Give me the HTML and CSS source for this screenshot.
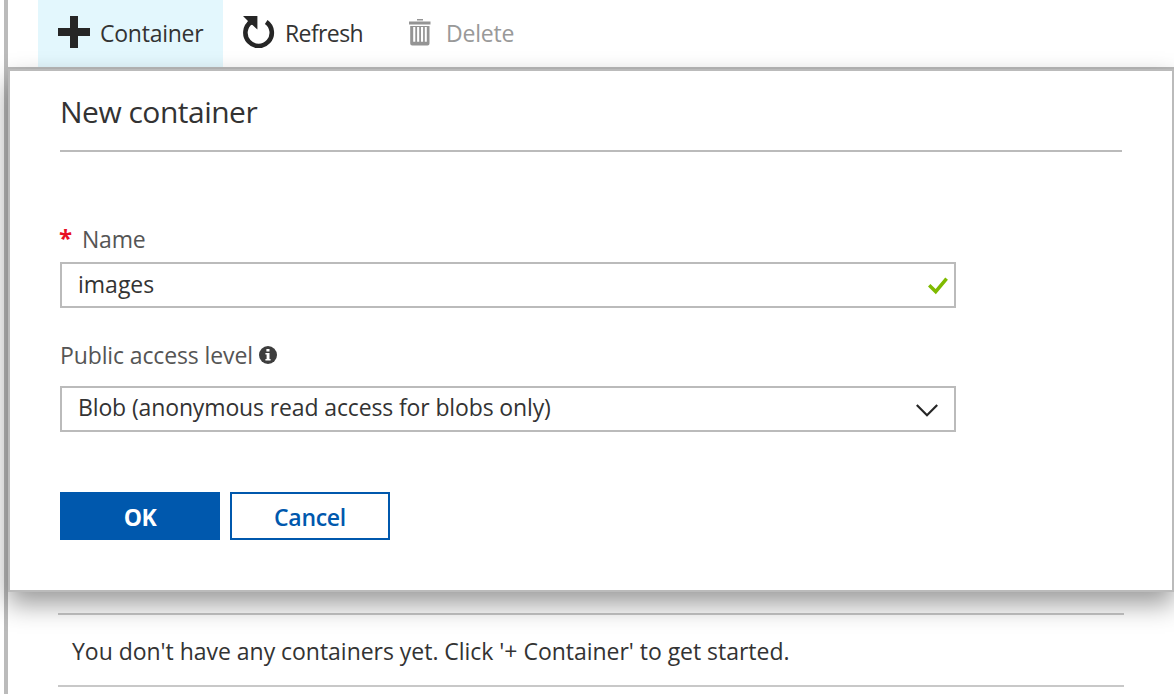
FILE: index.html
```html
<!DOCTYPE html>
<html lang="en">
<head>
<meta charset="utf-8">
<title>New container</title>
<link rel="stylesheet" href="styles.css">
</head>
<body>
<main class="blade">
  <nav class="toolbar">
    <button class="tool tool-active">
      <svg class="icon-plus" width="32" height="32" viewBox="0 0 32 32"><path d="M12 0h8v12h12v8H20v12h-8V20H0v-8h12z" fill="#262626"/></svg>
      <span class="t-container">Container</span>
    </button>
    <button class="tool tool-refresh">
      <svg width="32" height="32" viewBox="0 0 32 32"><path d="M23.2 6A13.2 13.2 0 1 1 8 6" fill="none" stroke="#262626" stroke-width="4.6"/><path d="M0 0h14.4v13.6L9.5 9 4 7.5 5 5z" fill="#262626"/></svg>
      <span class="t-refresh">Refresh</span>
    </button>
    <button class="tool tool-delete">
      <svg width="22" height="27" viewBox="0 0 22 27"><path d="M8 0h6v1.4H8zM0 2.4h21.5v3H0zM1.2 7h19.3v17.5q0 2-2 2H3.2q-2 0-2-2zM4.2 8v14.8h2.1V8zm3.9 0v14.8h2.1V8zm3.9 0v14.8h2.1V8zm3.8 0v14.8h2V8z" fill="#949494" fill-rule="evenodd"/></svg>
      <span class="t-delete">Delete</span>
    </button>
  </nav>
  <section class="list"><p class="t-empty">You don't have any containers yet. Click '+ Container' to get started.</p></section>
</main>
<form class="dialog">
  <h1 class="heading"><span class="t-heading">New container</span></h1>
  <label class="label label-name" for="name"><span class="required">*</span><span class="t-name">Name</span></label>
  <div class="field" id="name"><span class="t-value">images</span>
    <svg class="check" width="20" height="18" viewBox="0 0 20 18"><path d="M1.2 8.3 7.7 14.6 18.6 1.6" fill="none" stroke="#7fba00" stroke-width="3.5"/></svg>
  </div>
  <div class="label label-access"><span class="t-access">Public access level</span>
    <svg class="info" width="18" height="18" viewBox="0 0 18 18"><circle cx="9" cy="9" r="9" fill="#3d3d3d"/><path d="M7.4 3h3.1v2.6H7.4zM6.4 7h4.1v6h1.1v1.6H6.4V13h1.2V8.6H6.4z" fill="#fff"/></svg>
  </div>
  <div class="field"><span class="t-option">Blob (anonymous read access for blobs only)</span>
    <svg class="chevron" width="22" height="13" viewBox="0 0 22 13"><path d="M.8 1 11 11.2 21.2 1" fill="none" stroke="#262626" stroke-width="2.2"/></svg>
  </div>
  <div class="actions">
    <button type="button" class="btn btn-primary"><span class="t-ok">OK</span></button>
    <button type="button" class="btn"><span class="t-cancel">Cancel</span></button>
  </div>
</form>
</body>
</html>
```

FILE: styles.css
```css
* { box-sizing: border-box; }
body {
  margin: 0;
  height: 694px;
  overflow: hidden;
  position: relative;
  background: #fff;
  color: #333;
  font: 23px/32px "Open Sans", "Noto Sans", sans-serif;
}
button { font: inherit; color: inherit; background: none; border: 0; padding: 0; }
span, p { white-space: nowrap; }
svg { display: block; flex: none; }
.blade { margin-left: 4px; height: 694px; border-left: 4px solid #bbb; }
.toolbar { display: flex; height: 69px; border-bottom: 2px solid #bbb; padding-left: 30px; }
.tool { display: flex; align-items: flex-start; }
.tool svg { margin-top: 16px; }
.tool span { margin-top: 17px; }
.tool-active { width: 185px; padding-left: 20px; gap: 10px; background: #e3f7fd; }
.tool-refresh { padding-left: 20px; gap: 10px; width: 186px; }
.tool-delete { color: #999; gap: 15px; }
.tool .t-container { letter-spacing: -.25px; }
.tool .t-refresh { letter-spacing: -.6px; }
.tool .t-delete { letter-spacing: -.2px; }
.tool-delete svg { margin-top: 19px; }
.list { margin: 544px 50px 0 50px; height: 74px; border: solid #c8c8c8; border-width: 2px 0; padding: 20px 0 0 14px; }
.list p { margin: 0; letter-spacing: -.03px; }
.dialog {
  position: absolute;
  left: 8px; top: 69px;
  width: 1166px; height: 523px;
  margin: 0;
  padding: 0 50px;
  background: #fff;
  border: 2px solid #bbb;
  box-shadow: 0 12px 25px rgba(0, 0, 0, .4);
}
.heading { margin: 0; height: 81px; padding-top: 21px; border-bottom: 2px solid #bbb; font-size: 30px; line-height: 40px; font-weight: 400; letter-spacing: -.5px; }
.label { display: flex; color: #555; }
.label-name { margin-top: 71px; height: 39px; letter-spacing: -.2px; }
.label-access { margin-top: 31px; height: 47px; gap: 6px; letter-spacing: -.12px; }
.required { width: 22px; margin-left: -1px; margin-right: 1px; color: #e81123; font-size: 24px; font-weight: 700; line-height: 30px; }
.info { margin-top: 7px; }
.field { display: flex; justify-content: space-between; width: 896px; height: 46px; border: 2px solid #bbb; padding: 4px 6px 0 16px; }
.t-option { margin-top: -1px; letter-spacing: -.13px; }
.check { margin-top: 9px; }
.chevron { margin: 12px 10px 0 0; }
.actions { display: flex; gap: 10px; margin-top: 60px; }
.btn { width: 160px; height: 48px; padding-top: 2px; border: 2px solid #0058ad; color: #0058ad; font-weight: 600; letter-spacing: -.3px; }
.btn-primary { background: #0058ad; color: #fff; font-weight: 700; letter-spacing: -.5px; }
```
